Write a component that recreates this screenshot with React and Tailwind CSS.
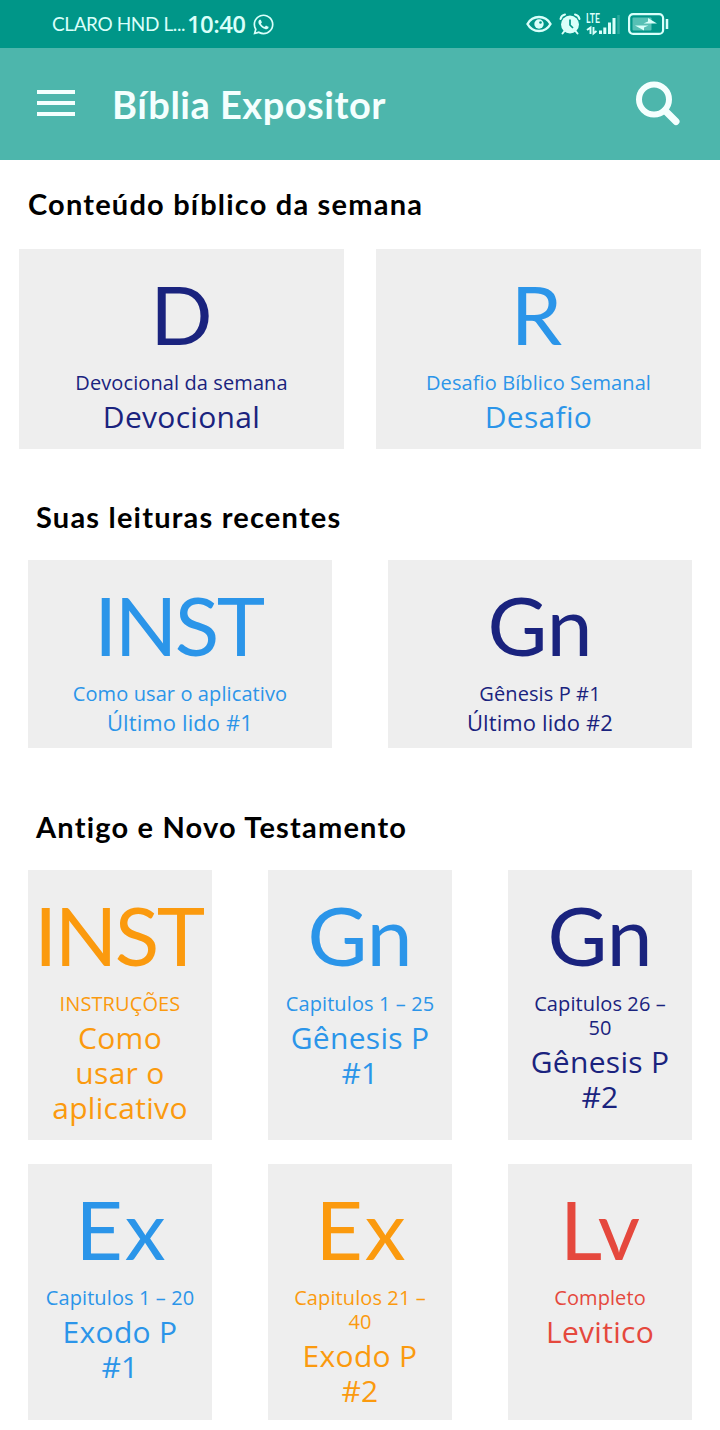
import { FaWhatsapp } from 'react-icons/fa'

const week = [
  { abbr: 'D', sub: 'Devocional da semana', title: 'Devocional', color: 'text-[#1a237e]' },
  { abbr: 'R', sub: 'Desafio Bíblico Semanal', title: 'Desafio', color: 'text-[#2b95e9]', track: 'pr-[4px]' },
]

const recent = [
  { abbr: 'INST', sub: 'Como usar o aplicativo', title: 'Último lido #1', color: 'text-[#2b95e9]', track: '-tracking-[2.5px] pr-[3px]' },
  { abbr: 'Gn', sub: 'Gênesis P #1', title: 'Último lido #2', color: 'text-[#1a237e]' },
]

const books = [
  { abbr: 'INST', sub: 'INSTRUÇÕES', title: 'Como\nusar o\naplicativo', color: 'text-[#fb9a0e]', track: '-tracking-[2.5px] pr-[3px]' },
  { abbr: 'Gn', sub: 'Capitulos 1 – 25', title: 'Gênesis P\n#1', color: 'text-[#2b95e9]' },
  { abbr: 'Gn', sub: 'Capitulos 26 –\n50', title: 'Gênesis P\n#2', color: 'text-[#1a237e]' },
  { abbr: 'Ex', sub: 'Capitulos 1 – 20', title: 'Exodo P\n#1', color: 'text-[#2b95e9]', track: 'tracking-[2px] pl-[3px]' },
  { abbr: 'Ex', sub: 'Capitulos 21 –\n40', title: 'Exodo P\n#2', color: 'text-[#fb9a0e]', track: 'tracking-[2px] pl-[3px]' },
  { abbr: 'Lv', sub: 'Completo', title: 'Levitico', color: 'text-[#e5483d]', track: 'tracking-[3px] pl-[3px]' },
]

function Card({ abbr, sub, title, color, track = '', small, className = '' }) {
  return (
    <div className={`bg-[#eeeeee] pt-[15px] text-center whitespace-pre-line font-['Open_Sans',sans-serif] ${color} ${className}`}>
      <div className={`font-['Lato',sans-serif] text-[82px] leading-[98px] ${track}`}>{abbr}</div>
      <div className="mt-[9px] text-[20px] leading-6 tracking-[0.1px]">{sub}</div>
      <div className={small ? 'mt-[3px] text-[22px] leading-[26px] tracking-[0.1px]' : 'mt-1 text-[30px] leading-[35px] tracking-[0.3px]'}>
        {title}
      </div>
    </div>
  )
}

function EyeIcon() {
  return (
    <svg width="26" height="18" viewBox="0 0 26 18" fill="none">
      <path d="M1.5 9C4 4.500 8.500 2 13 2s9 2.500 11.500 7C22 13.500 17.500 16 13 16S4 13.500 1.500 9z" stroke="currentColor" strokeWidth="2.400" />
      <circle cx="13" cy="9" r="4.700" fill="currentColor" />
      <circle cx="14.500" cy="7.500" r="1.300" fill="#009688" />
    </svg>
  )
}

function AlarmIcon() {
  return (
    <svg width="22" height="22" viewBox="0 0 22 22" fill="none">
      <circle cx="11" cy="11.500" r="9" fill="currentColor" />
      <path d="M1.500 6C2 3.500 3.500 2 6 1.500M20.500 6C20 3.500 18.500 2 16 1.500M5.500 18l-2 2.500M16.500 18l2 2.500" stroke="currentColor" strokeWidth="2" strokeLinecap="round" />
      <path d="M11 6.500v5.500l3 3" stroke="#009688" strokeWidth="1.700" />
    </svg>
  )
}

function SignalIcon() {
  return (
    <svg className="overflow-visible" width="35" height="24" viewBox="0 0 35 24" fill="none">
      <text x="0" y="11" fontSize="13" fontWeight="700" textLength="14" lengthAdjust="spacingAndGlyphs" fill="currentColor">LTE</text>
      <path d="M1 18l3.500-2.500V22M7.500 15v6.500l3-2.500" stroke="currentColor" strokeWidth="1.900" />
      <path d="M14.500 22v-3.500M18.800 22v-6.500M23.500 22V10.500M28 22V6" stroke="currentColor" strokeWidth="3" />
      <path d="M32.500 22V3" stroke="currentColor" strokeWidth="2.500" opacity="0.2" />
    </svg>
  )
}

function BatteryIcon() {
  return (
    <svg width="41" height="22" viewBox="0 0 41 22" fill="none">
      <rect x="1.100" y="1.100" width="34" height="19.800" rx="4" stroke="currentColor" strokeWidth="2.200" />
      <rect x="4.500" y="4.500" width="19" height="13" rx="1" fill="currentColor" opacity="0.4" />
      <path d="M20 5l9 5.500H15.500l4.500-2zM16 17.500L7 12.500h13.500l-4.500 2z" fill="currentColor" />
      <path d="M39 6v10" stroke="currentColor" strokeWidth="2.500" />
    </svg>
  )
}

function StatusBar() {
  return (
    <div className="flex h-12 items-center bg-[#009688] pr-[51px] pl-[52px] text-[#d9fffa]">
      <span className="w-[135px] text-[19px] -tracking-[0.4px] whitespace-nowrap">CLARO HND L...</span>
      <span className="w-[65px] font-['Open_Sans',sans-serif] text-[24px] font-semibold -tracking-[0.6px]">10:40</span>
      <FaWhatsapp className="size-[23px]" />
      <div className="ml-auto flex items-center">
        <EyeIcon />
        <div className="ml-[7px]"><AlarmIcon /></div>
        <div className="ml-[5px]"><SignalIcon /></div>
        <div className="ml-[7px]"><BatteryIcon /></div>
      </div>
    </div>
  )
}

function AppBar() {
  return (
    <div className="flex h-28 items-center bg-[#4db6ac] pr-[40px] pl-[37px] text-[#f4fffe]">
      <svg className="-mt-0.5" width="38" height="28" viewBox="0 0 38 28" stroke="currentColor" strokeWidth="4">
        <path d="M0 3h38M0 14h38M0 25h38" />
      </svg>
      <h1 className="ml-[37px] text-[38px] leading-[46px] font-bold tracking-[0.5px]">Bíblia Expositor</h1>
      <svg className="-mt-0.5 ml-auto" width="45" height="45" viewBox="0 0 45 45" fill="none" stroke="currentColor">
        <circle cx="19" cy="18.500" r="15" strokeWidth="6" />
        <path d="M30 29.500l11 11" strokeWidth="7" strokeLinecap="round" />
      </svg>
    </div>
  )
}

function Heading({ children, className }) {
  return <h2 className={`text-[29px] leading-[36px] font-bold tracking-[1.2px] text-black ${className}`}>{children}</h2>
}

export default function App() {
  return (
    <div className="h-[1430px] overflow-hidden bg-white font-['Lato',sans-serif]">
      <StatusBar />
      <AppBar />
      <section className="px-[19px] pt-[26px]">
        <Heading className="ml-[9px]">Conteúdo bíblico da semana</Heading>
        <div className="mt-[27px] grid grid-cols-2 gap-8">
          {week.map((c) => <Card key={c.abbr} {...c} className="h-[200px]" />)}
        </div>
      </section>
      <section className="px-7 pt-[50px]">
        <Heading className="ml-2">Suas leituras recentes</Heading>
        <div className="mt-[25px] grid grid-cols-2 gap-14">
          {recent.map((c) => <Card key={c.abbr} {...c} small className="h-[188px]" />)}
        </div>
      </section>
      <section className="px-7 pt-[61px]">
        <Heading className="ml-2">Antigo e Novo Testamento</Heading>
        <div className="mt-[25px] grid grid-cols-3 grid-rows-[270px_256px] gap-x-14 gap-y-6">
          {books.map((c, i) => <Card key={i} {...c} />)}
        </div>
      </section>
    </div>
  )
}
